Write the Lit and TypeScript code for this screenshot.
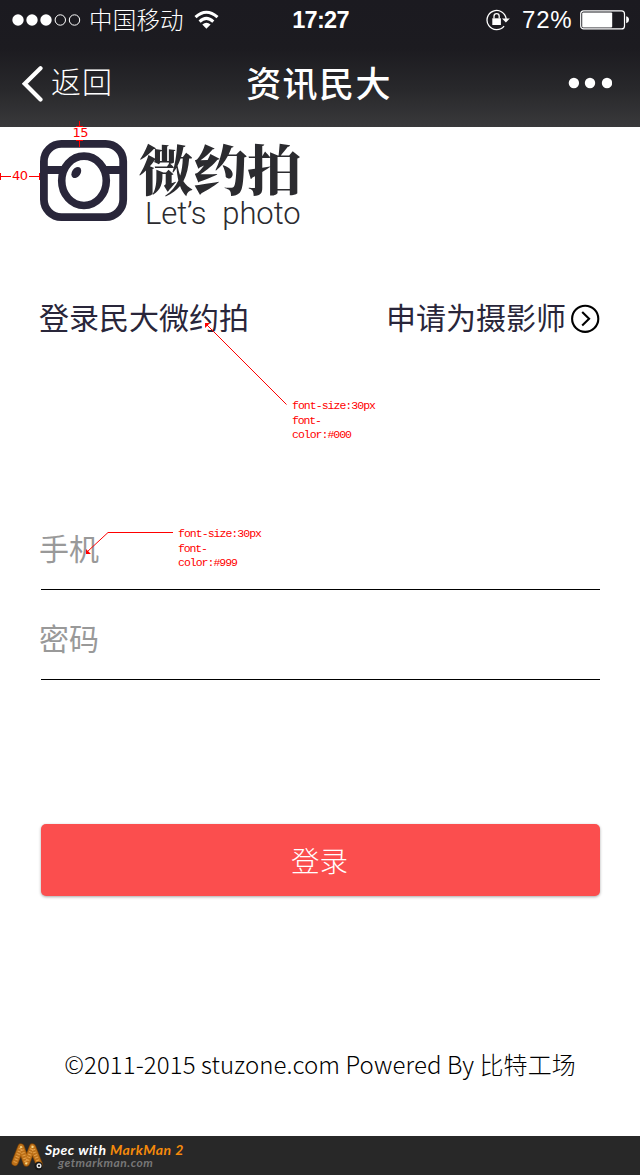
import { LitElement, html, css, svg } from "lit";
import { customElement, property } from "lit/decorators.js";

@customElement("status-bar")
class StatusBar extends LitElement {
  static styles = css`
    :host { display: flex; height: 40px; align-items: center; color: #fff; position: relative; justify-content: space-between; padding: 0 11px 0 12px; box-sizing: border-box; }
    .side { display: flex; align-items: center; height: 40px; }
    .carrier { font: 300 23.5px/36px "Noto Sans CJK SC", sans-serif; margin: -3px 10px 0 8px; width: 95px; white-space: nowrap; letter-spacing: 0.2px; }
    .time { position: absolute; left: 1px; right: 0; top: 0; text-align: center; font: 700 23.5px/40px "Liberation Sans", sans-serif; letter-spacing: -0.7px; }
    .pct { font: 400 24px/40px "Liberation Sans", sans-serif; margin: 0 7px 0 12px; letter-spacing: 0.8px; width: 51px; white-space: nowrap; }
    svg { display: block; }
  `;
  render() {
    return html`
      <div class="side">
        <svg width="69" height="12" viewBox="0 0 69 12">
          <g fill="#fff"><circle cx="6" cy="6" r="5.7"/><circle cx="20" cy="6" r="5.7"/><circle cx="34" cy="6" r="5.7"/></g>
          <g fill="none" stroke="#fff" stroke-width="1"><circle cx="48.3" cy="6" r="5.2"/><circle cx="62.5" cy="6" r="5.2"/></g>
        </svg>
        <span class="carrier">中国移动</span>
        <svg width="25" height="20" viewBox="0 0 25 20">
          <g fill="none" stroke="#fff" stroke-width="3"><path d="M1.5 7.2Q12.3 -2.8 23.5 7.2"/><path d="M5.6 11.7Q12.3 5.2 19.3 11.7"/></g>
          <path d="M8.3 14.6Q12.4 11 16.6 14.6L12.4 18.8Z" fill="#fff"/>
        </svg>
      </div>
      <span class="time">17:27</span>
      <div class="side">
        <svg width="24" height="22" viewBox="0 0 24 22">
          <path d="M18.1 17.1A9.6 9.6 0 1 1 20.2 10.2" fill="none" stroke="#fff" stroke-width="1.3"/>
          <path d="M16 9.6H23.8L19.9 13.4Z" fill="#fff"/>
          <rect x="6.3" y="9.3" width="8.6" height="6.7" fill="#fff"/>
          <path d="M8 9.5V7.3a2.6 2.6 0 0 1 5.2 0V9.5" fill="none" stroke="#fff" stroke-width="1.3"/>
        </svg>
        <span class="pct">72%</span>
        <svg width="49" height="20" viewBox="0 0 49 20">
          <rect x=".7" y=".9" width="43.8" height="18" rx="3" fill="none" stroke="#fff" stroke-width="1.2"/>
          <rect x="2.2" y="2.4" width="30" height="15" rx="1" fill="#fff"/>
          <path d="M46.2 6.2Q49 7 49 9.7Q49 12.4 46.2 13.2Z" fill="#fff"/>
        </svg>
      </div>`;
  }
}

@customElement("nav-bar")
class NavBar extends LitElement {
  static styles = css`
    :host { display: grid; grid-template-columns: 1fr auto 1fr; height: 87px; align-items: center; color: #fff; padding: 0 28px 0 22px; box-sizing: border-box; font-family: "Noto Sans CJK SC", sans-serif; }
    .back { display: flex; align-items: center; gap: 8px; font-weight: 300; font-size: 30px; line-height: 72px; letter-spacing: 1px; }
    .back span { margin-bottom: 8px; }
    .title { font-size: 35px; line-height: 72px; font-weight: 500; letter-spacing: 1.4px; margin: 0 -2px 4px 2px; }
    .more { justify-self: end; margin-bottom: 1px; }
    svg { display: block; }
  `;
  render() {
    return html`
      <div class="back">
        <svg width="21" height="36" viewBox="0 0 21 36"><path d="M18.5 2.3L2.8 17.8L18.5 33.4" fill="none" stroke="#fff" stroke-width="4.2" stroke-linecap="round"/></svg>
        <span>返回</span>
      </div>
      <span class="title">资讯民大</span>
      <svg class="more" width="44" height="12" viewBox="0 0 44 12" fill="#fff"><circle cx="5.9" cy="6" r="5.2"/><circle cx="22" cy="6" r="5.2"/><circle cx="39" cy="6" r="5.2"/></svg>`;
  }
}

@customElement("brand-logo")
class BrandLogo extends LitElement {
  static styles = css`
    :host { display: flex; gap: 11px; height: 100px; }
    svg { display: block; flex: none; }
    .words { display: flex; flex-direction: column; color: #2b2b2f; white-space: nowrap; }
    .cn { font: 900 54px/56px "Noto Serif CJK SC", "Noto Sans CJK SC", serif; letter-spacing: 0.1px; }
    .en { font: 300 31px/36px Roboto, sans-serif; margin: 0 0 0 6px; word-spacing: 8.5px; letter-spacing: -0.1px; }
  `;
  render() {
    return html`
      <svg width="88" height="82" viewBox="0 0 88 82">
        <g fill="none" stroke="#29263a">
          <rect x="3.9" y="3.9" width="79.3" height="73.2" rx="17.5" stroke-width="7.8"/>
          <path d="M4 30H24M64 30H84" stroke-width="7.8"/>
          <ellipse cx="44" cy="40.8" rx="22.3" ry="24.7" stroke-width="7.6"/>
        </g>
        <ellipse cx="36.3" cy="32.5" rx="4.2" ry="6.1" transform="rotate(35 36.3 32.5)" fill="#29263a"/>
      </svg>
      <div class="words"><span class="cn">微约拍</span><span class="en">Let’s photo</span></div>`;
  }
}

@customElement("form-field")
class FormField extends LitElement {
  @property() label = "";
  static styles = css`
    :host { display: block; height: 90px; box-sizing: border-box; border-bottom: 1px solid #000; margin-left: 1px; }
    .label { display: block; margin-left: -2px; padding-top: 17px; color: #999; font: 400 30px/60px "Noto Sans CJK SC", sans-serif; }
  `;
  render() {
    return html`<span class="label">${this.label}</span>`;
  }
}

@customElement("spec-notes")
class SpecNotes extends LitElement {
  static styles = css`
    :host { position: absolute; inset: 0; pointer-events: none; }
    svg { display: block; }
    .code { font: 400 11.5px "Liberation Mono", monospace; }
    .num { font: 400 13px "DejaVu Sans", sans-serif; }
  `;
  note(x: number, y: number, color: string) {
    return svg`<g class="code" fill="#f00">
      <text x=${x} y=${y} textLength="84">font-size:30px</text>
      <text x=${x} y=${y + 15} textLength="30">font-</text>
      <text x=${x} y=${y + 29} textLength="60">color:${color}</text></g>`;
  }
  render() {
    return html`<svg width="640" height="1175" viewBox="0 0 640 1175">
      <g fill="none" stroke="#f00" stroke-width="1">
        <path d="M79.5 121V126M76 126.5H83M76 140.5H83M79.5 141V147"/>
        <path d="M.5 173V180M1 176.5H11M29 176.5H39M39.5 173V180"/>
        <path d="M206 324L286.5 404.5M87 552L108 532.5H173"/>
      </g>
      <path d="M205 323H210L205 328ZM86 549V554H91Z" fill="#f00"/>
      <g class="num" fill="#f00"><text x="72.5" y="137" textLength="16">15</text><text x="12" y="180" textLength="16">40</text></g>
      ${this.note(292, 409, "#000")}
      ${this.note(178, 537, "#999")}
    </svg>`;
  }
}

@customElement("markman-bar")
class MarkmanBar extends LitElement {
  static styles = css`
    :host { display: flex; height: 39px; background: #282828; padding-left: 11px; box-sizing: border-box; }
    svg { display: block; margin-top: 5px; flex: none; }
    .copy { display: flex; flex-direction: column; margin: 6px 0 0 1px; white-space: nowrap; font-family: Lato, sans-serif; font-style: italic; font-weight: 700; }
    .top { font-size: 14px; line-height: 15px; color: #fff; letter-spacing: 0.47px; }
    .brand { color: #f58a0b; }
    .url { font-size: 12px; line-height: 12px; color: #777; margin-left: 13px; letter-spacing: 0.5px; }
  `;
  render() {
    return html`
      <svg width="33" height="32" viewBox="0 0 33 32">
        <g fill="none" stroke-linecap="round" stroke-linejoin="round">
          <path d="M4 21.5L10 6L15.5 22L21.5 6L28.5 24" stroke="#7c4308" stroke-width="7.2"/>
          <path d="M4 21.5L10 6L15.5 22L21.5 6L28.5 24" stroke="#bd7119" stroke-width="5.8"/>
          <path d="M4 21.5L10 6L15.5 22L21.5 6L28.5 24" stroke="#e5a04a" stroke-width="3.4" stroke-linecap="butt" stroke-dasharray="1 1.8"/>
        </g>
        <circle cx="27.6" cy="25" r="4.2" fill="#171717"/><circle cx="28" cy="24.8" r="2.5" fill="#e6e6e6"/><circle cx="28" cy="24.8" r="1.1" fill="#111"/>
        <circle cx="15.2" cy="22.5" r="1.1" fill="#f5dc8c"/><circle cx="10" cy="6" r="1" fill="#f5dc8c"/><circle cx="21.5" cy="6" r="1" fill="#f5dc8c"/>
      </svg>
      <div class="copy"><span class="top">Spec with <span class="brand">MarkMan 2</span></span><span class="url">getmarkman.com</span></div>`;
  }
}

@customElement("app-root")
class AppRoot extends LitElement {
  static styles = css`
    :host { display: flex; flex-direction: column; position: relative; width: 640px; height: 1175px; overflow: hidden; background: #fff; font-family: "Noto Sans CJK SC", sans-serif; }
    header { height: 127px; flex: none; background: linear-gradient(#1b1a20 0, #1c1b20 38%, #28282b 70%, #39393b 100%); }
    main { flex: 1; display: flex; flex-direction: column; padding: 13px 40px 0; }
    .links { display: flex; justify-content: space-between; margin-top: 56px; height: 40px; font-size: 30px; line-height: 40px; color: #29263a; white-space: nowrap; }
    .links span { margin-left: -1px; }
    .apply { display: flex; align-items: center; gap: 5px; }
    .apply svg { margin-top: 6px; }
    .form { margin-top: 164px; }
    .login { margin: 144px 0 0 1px; width: 559px; height: 72px; border: 0; padding: 0 2px 1px 0; border-radius: 5px; background: #fb4e4e; color: #fff; font: 300 28.5px/71px "Noto Sans CJK SC", sans-serif; box-shadow: 0 1px 3px rgba(0,0,0,.35); }
    .copyright { margin: 148px -10px 0; text-align: center; white-space: nowrap; font-size: 24px; line-height: 40px; font-weight: 300; color: #000; letter-spacing: 0.1px; }
    svg { display: block; }
  `;
  render() {
    return html`
      <header><status-bar></status-bar><nav-bar></nav-bar></header>
      <main>
        <brand-logo></brand-logo>
        <div class="links">
          <span>登录民大微约拍</span>
          <div class="apply"><span>申请为摄影师</span>
            <svg width="29" height="30" viewBox="0 0 29 30" fill="none" stroke="#000" stroke-width="2.1"><circle cx="14.2" cy="14.8" r="13.1"/><path d="M11.2 8L18.1 14.8L11.2 21.6"/></svg>
          </div>
        </div>
        <div class="form"><form-field label="手机"></form-field><form-field label="密码"></form-field></div>
        <button class="login">登录</button>
        <p class="copyright">©2011-2015 stuzone.com Powered By 比特工场</p>
      </main>
      <markman-bar></markman-bar>
      <spec-notes></spec-notes>`;
  }
}
